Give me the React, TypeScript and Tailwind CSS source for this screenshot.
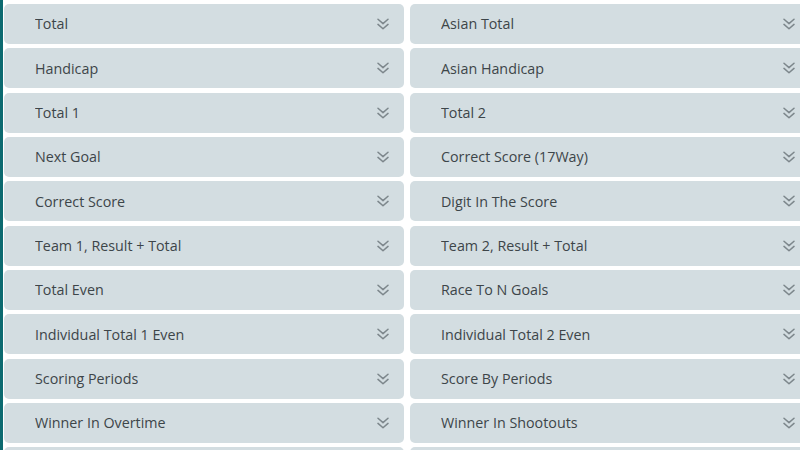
const markets: [string, string][] = [
    ["Total", "Asian Total"],
    ["Handicap", "Asian Handicap"],
    ["Total 1", "Total 2"],
    ["Next Goal", "Correct Score (17Way)"],
    ["Correct Score", "Digit In The Score"],
    ["Team 1, Result + Total", "Team 2, Result + Total"],
    ["Total Even", "Race To N Goals"],
    ["Individual Total 1 Even", "Individual Total 2 Even"],
    ["Scoring Periods", "Score By Periods"],
    ["Winner In Overtime", "Winner In Shootouts"],
    // next row only peeks in at the bottom edge
    ["", ""],
];

function Chevrons() {
    return (
        <svg viewBox="0 0 12 12" className="w-3 h-3 text-[#7d878c]" fill="none" stroke="currentColor" strokeWidth={1.5} strokeLinecap="round" strokeLinejoin="round">
            <path d="M1 1.2 L6 5.6 L11 1.2" />
            <path d="M1 6.4 L6 10.8 L11 6.4" />
        </svg>
    );
}

function MarketRow({ title }: { title: string }) {
    return (
        <div className="h-10 bg-[#d3dde1] rounded-[5px] flex items-center justify-between pl-[31px] pr-[15px] cursor-pointer">
            <span className="text-[14.3px] text-[#3d4549] truncate">{title}</span>
            <Chevrons />
        </div>
    );
}

export default function App() {
    return (
        <main className="w-[800px] h-[450px] overflow-hidden bg-white flex font-['Open_Sans',sans-serif]">
            <div className="w-[3px] shrink-0 bg-[#0c6a70]" />
            <div className="pl-[1px] pt-[4px]">
                <div className="grid grid-cols-[400px_400px] gap-x-[6px] gap-y-[4.33px]">
                    {markets.flatMap(([a, b], i) => [
                        <MarketRow key={`l${i}`} title={a} />,
                        <MarketRow key={`r${i}`} title={b} />,
                    ])}
                </div>
            </div>
        </main>
    );
}
